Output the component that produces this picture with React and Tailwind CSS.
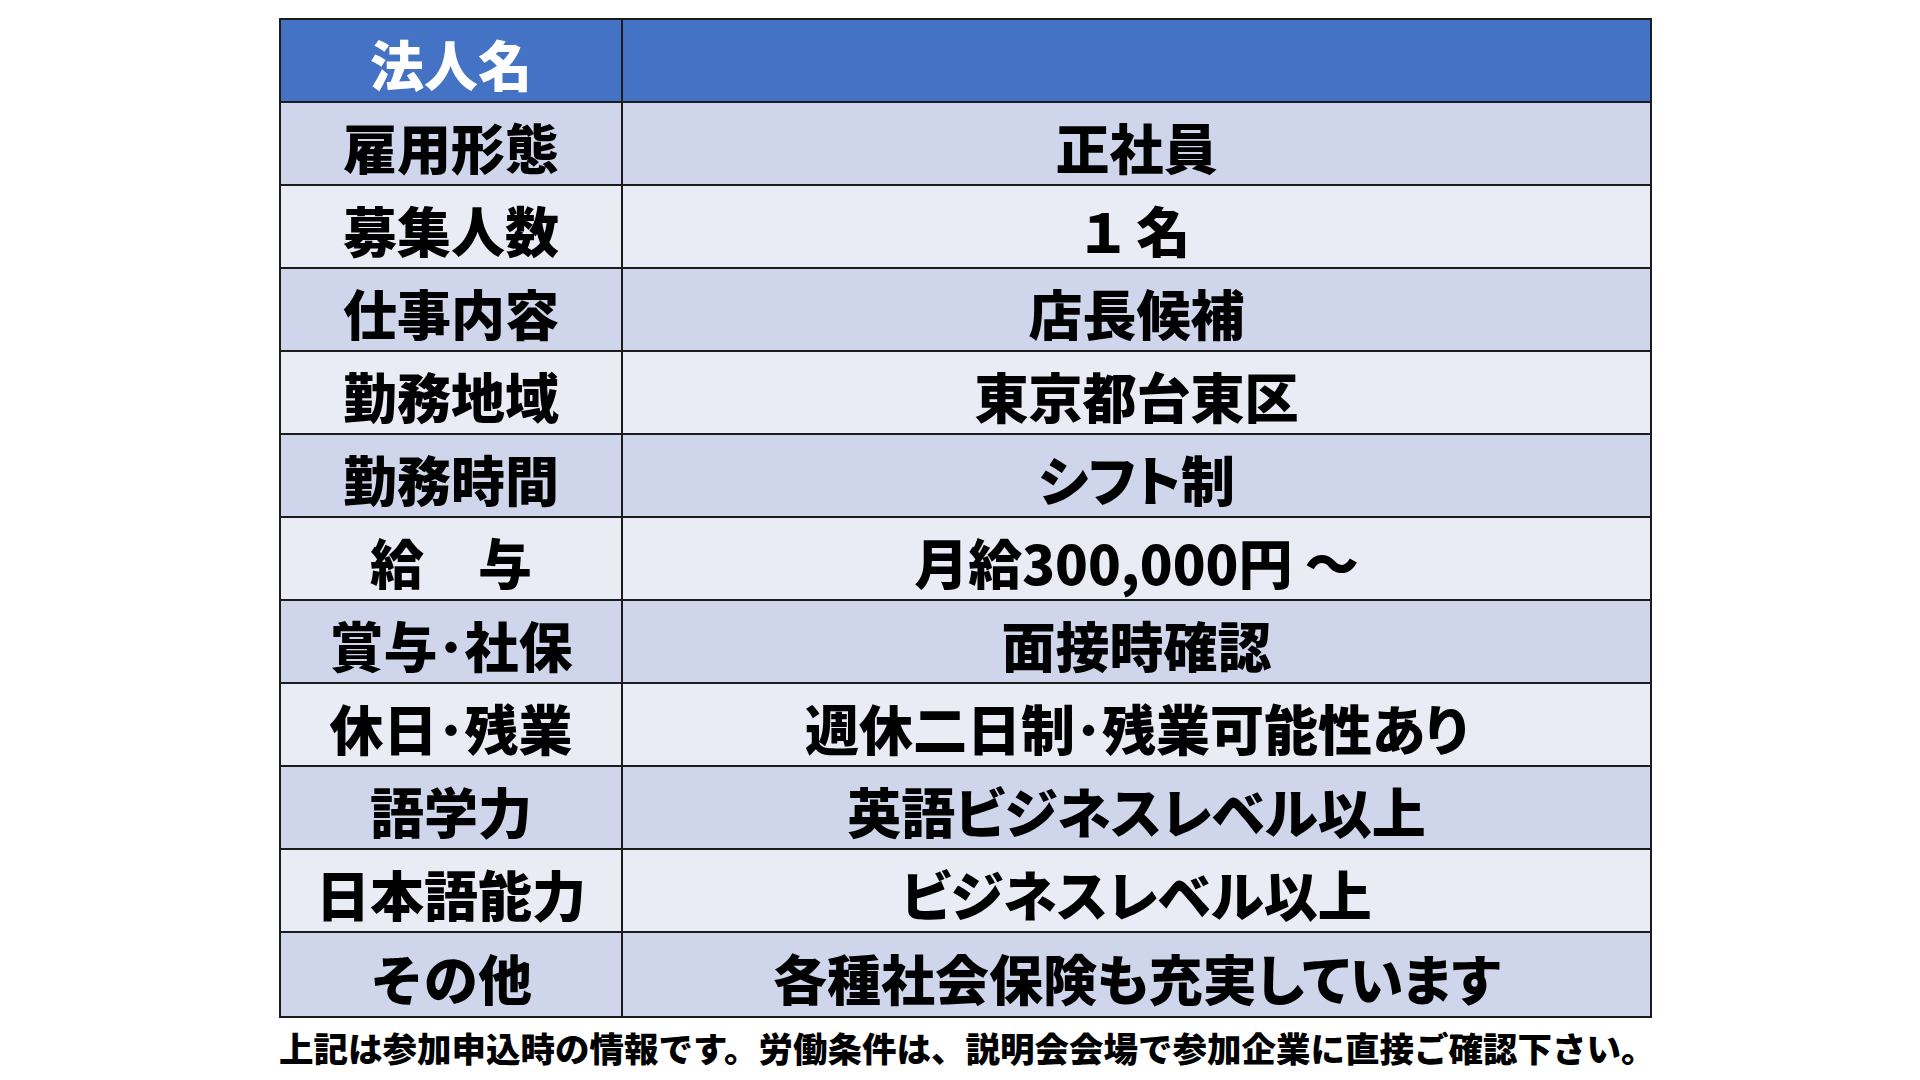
import React from 'react';

const rows = [
  { label: '雇用形態', value: '正社員' },
  { label: '募集人数', value: '１ 名' },
  { label: '仕事内容', value: '店長候補' },
  { label: '勤務地域', value: '東京都台東区' },
  { label: '勤務時間', value: 'シフト制' },
  { label: '給　与', value: '月給300,000円 ～' },
  { label: '賞与･社保', value: '面接時確認' },
  { label: '休日･残業', value: '週休二日制･残業可能性あり' },
  { label: '語学力', value: '英語ビジネスレベル以上' },
  { label: '日本語能力', value: 'ビジネスレベル以上' },
  { label: 'その他', value: '各種社会保険も充実しています' },
];

const font = { fontFamily: '"Noto Sans CJK JP", "Noto Sans", sans-serif' };

const App = () => {
  return (
    <div className="w-[1920px] h-[1080px] bg-white overflow-hidden" style={font}>
      <div className="ml-[279px] pt-[18px] w-[1373px]">
        <div className="border-2 border-[#1c1c1c]">
          {/* header row */}
          <div className="flex h-[83px] bg-[#4472c4] border-b-2 border-[#1c1c1c]">
            <div className="w-[342px] border-r-2 border-[#1c1c1c] flex items-center justify-center pt-[7px] text-white text-[54px] font-black leading-none">
              法人名
            </div>
            <div className="flex-1" />
          </div>
          {rows.map((row, i) => (
            <div
              key={row.label}
              className={`flex h-[83px] ${i % 2 === 0 ? 'bg-[#cfd5ea]' : 'bg-[#e9ebf5]'} ${
                i < rows.length - 1 ? 'border-b-2 border-[#1c1c1c]' : ''
              }`}
            >
              <div className="w-[342px] border-r-2 border-[#1c1c1c] flex items-center justify-center pt-[7px] text-black text-[54px] font-black leading-none whitespace-pre">
                {row.label}
              </div>
              <div className="flex-1 flex items-center justify-center pt-[7px] text-black text-[54px] font-black leading-none whitespace-pre [font-feature-settings:'palt']">
                {row.value}
              </div>
            </div>
          ))}
        </div>
        <p className="mt-[12px] text-[34.5px] font-black leading-none text-black whitespace-nowrap">
          上記は参加申込時の情報です。労働条件は、説明会会場で参加企業に直接ご確認下さい。
        </p>
      </div>
    </div>
  );
};

export default App;
